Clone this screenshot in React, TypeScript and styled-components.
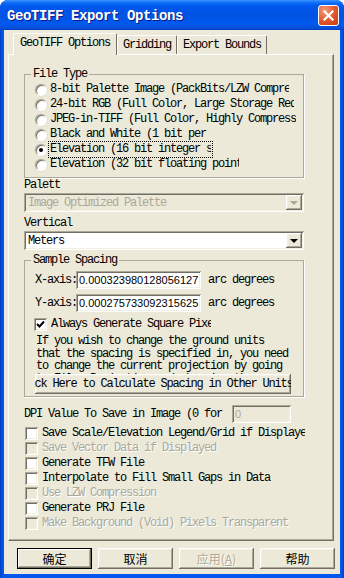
import React from 'react';
import styled, { createGlobalStyle, css } from 'styled-components';

const MONO = `"Liberation Mono", "Noto Sans CJK SC", monospace`;
const CJK = `"Noto Sans CJK SC", "Liberation Sans", sans-serif`;
const SANS = `"Liberation Sans", "Noto Sans CJK SC", sans-serif`;
const FACE = '#ECE9D8';
const DIS = '#ACA899';

const GlobalStyle = createGlobalStyle`
  *, *::before, *::after { box-sizing: border-box; }
  html, body { margin: 0; padding: 0; width: 344px; height: 578px; overflow: hidden; background: #fff; }
  #root { width: 344px; height: 578px; }
`;

const sunken = css`
  box-shadow: inset 1px 1px 0 #aca899, inset -1px -1px 0 #fff, inset 2px 2px 0 #716f64,
    inset -2px -2px 0 #f1efe2;
`;
const raised = css`
  box-shadow: inset -1px -1px 0 #716f64, inset 1px 1px 0 #fff, inset -2px -2px 0 #aca899,
    inset 2px 2px 0 #f1efe2;
`;

const Window = styled.div`
  width: 344px;
  height: 578px;
  display: flex;
  flex-direction: column;
  background: linear-gradient(to right, #0040c8 0, #0058ee 3px, #0058ee 341px, #0040c8 344px);
  border-radius: 8px 8px 0 0;
  overflow: hidden;
  font-family: ${MONO};
  font-size: 12px;
  letter-spacing: -1.2px;
  color: #000;
`;

const TitleBar = styled.div`
  height: 30px;
  flex: none;
  display: flex;
  align-items: center;
  justify-content: space-between;
  padding: 1px 5px 0 7px;
  background: linear-gradient(
    to bottom,
    #3d95ff 0px,
    #0a6af5 3px,
    #0058ee 6px,
    #0053e3 15px,
    #0058ee 24px,
    #0a4fd8 28px,
    #003fc4 30px
  );
`;

const TitleText = styled.span`
  color: #fff;
  font-weight: bold;
  font-size: 14px;
  letter-spacing: -0.4px;
  text-shadow: 1px 1px 0 #0a1e8a;
`;

const CloseButton = styled.div`
  width: 21px;
  height: 21px;
  border: 1px solid #fff;
  border-radius: 3px;
  background: radial-gradient(circle at 30% 25%, #f29a7c 0%, #e35a30 50%, #c43b12 100%);
  display: flex;
  align-items: center;
  justify-content: center;
`;

const Client = styled.div`
  flex: 1;
  margin: 0 4px 4px 4px;
  background: ${FACE};
  padding: 3px 0 0 4px;
  display: flex;
  flex-direction: column;
`;

const TabStrip = styled.div`
  display: flex;
  align-items: flex-end;
  height: 22px;
  margin: 0 0 -1px 5px;
  position: relative;
  z-index: 1;
`;

const Tab = styled.div<{ $active?: boolean }>`
  height: ${(p) => (p.$active ? 22 : 19)}px;
  margin-bottom: ${(p) => (p.$active ? 0 : 1)}px;
  padding: 0 ${(p) => (p.$active ? 6 : 5)}px ${(p) => (p.$active ? 3 : 0)}px;
  display: flex;
  align-items: center;
  white-space: nowrap;
  background: ${FACE};
  border-top: 1px solid #fff;
  border-left: 1px solid #fff;
  border-right: 1px solid #716f64;
  border-radius: 2px 2px 0 0;
`;

const Panel = styled.div`
  width: 326px;
  height: 487px;
  flex: none;
  background: ${FACE};
  border: 1px solid;
  border-color: #fff #716f64 #716f64 #fff;
  box-shadow: inset -1px -1px 0 #aca899;
  padding: 13px 0 0 15px;
  display: flex;
  flex-direction: column;
  align-items: flex-start;
`;

const Group = styled.fieldset<{ $pad: string; $mt?: number }>`
  margin: ${(p) => p.$mt ?? 0}px 0 0 0;
  width: 280px;
  min-width: 0;
  padding: ${(p) => p.$pad};
  border: 1px solid #aca899;
  box-shadow: 1px 1px 0 #fff;
  display: flex;
  flex-direction: column;
  align-items: flex-start;
`;

const Legend = styled.legend`
  padding: 0 2px;
  margin-left: -4px;
  height: 12px;
  line-height: 12px;
`;

const OptionRow = styled.div`
  display: flex;
  align-items: center;
  height: 15px;
  gap: 3px;
`;

const RadioDot = styled.span<{ $on?: boolean }>`
  width: 12px;
  height: 12px;
  flex: none;
  border-radius: 50%;
  background: #fff;
  border: 1px solid;
  border-color: #aca899 #fff #fff #aca899;
  box-shadow: inset 1px 1px 0 #716f64, 0 0 0 0.5px #d8d4c4;
  display: flex;
  align-items: center;
  justify-content: center;
  &::after {
    content: '';
    width: 4px;
    height: 4px;
    border-radius: 50%;
    background: #000;
    display: ${(p) => (p.$on ? 'block' : 'none')};
  }
`;

const ClipText = styled.span<{ $w?: number; $focus?: boolean; $disabled?: boolean }>`
  ${(p) => (p.$w ? `width: ${p.$w}px; overflow: hidden;` : '')}
  white-space: nowrap;
  line-height: 13px;
  height: 13px;
  color: ${(p) => (p.$disabled ? DIS : '#000')};
  ${(p) => (p.$disabled ? 'text-shadow: 1px 1px 0 #fff;' : '')}
  outline: ${(p) => (p.$focus ? '1px dotted #000' : 'none')};
  outline-offset: 1px;
`;

const FieldLabel = styled.div<{ $mt: number }>`
  margin-top: ${(p) => p.$mt}px;
  height: 12px;
  line-height: 12px;
`;

const Select = styled.div<{ $disabled?: boolean; $mt: number }>`
  margin-top: ${(p) => p.$mt}px;
  width: 280px;
  height: 19px;
  display: flex;
  align-items: center;
  padding: 2px 2px 2px 4px;
  background: ${(p) => (p.$disabled ? FACE : '#fff')};
  color: ${(p) => (p.$disabled ? DIS : '#000')};
  ${sunken}
`;

const SelectText = styled.span`
  flex: 1;
  white-space: nowrap;
  overflow: hidden;
`;

const DropButton = styled.span<{ $disabled?: boolean }>`
  width: 16px;
  height: 15px;
  flex: none;
  background: ${FACE};
  ${raised}
  display: flex;
  align-items: center;
  justify-content: center;
  &::after {
    content: '';
    border-left: 4px solid transparent;
    border-right: 4px solid transparent;
    border-top: 4px solid ${(p) => (p.$disabled ? DIS : '#000')};
    margin-top: 1px;
  }
`;

const AxisRow = styled.div<{ $mt?: number }>`
  margin-top: ${(p) => p.$mt ?? 0}px;
  display: flex;
  align-items: center;
  height: 18px;
`;

const AxisLabel = styled.span`
  width: 41px;
  white-space: nowrap;
  overflow: hidden;
`;

const TextInput = styled.div<{ $w: number; $disabled?: boolean }>`
  width: ${(p) => p.$w}px;
  flex: none;
  height: 18px;
  padding: 0 2px 0 3px;
  display: flex;
  align-items: center;
  font-family: ${SANS};
  font-size: 11px;
  letter-spacing: 0;
  white-space: nowrap;
  overflow: hidden;
  background: ${(p) => (p.$disabled ? FACE : '#fff')};
  color: ${(p) => (p.$disabled ? DIS : '#000')};
  ${sunken}
`;

const Unit = styled.span`
  margin-left: 7px;
  white-space: nowrap;
`;

const CheckRow = styled.div<{ $mt?: number; $ml?: number; $h?: number }>`
  margin-top: ${(p) => p.$mt ?? 0}px;
  margin-left: ${(p) => p.$ml ?? 0}px;
  height: ${(p) => p.$h ?? 15}px;
  display: flex;
  align-items: center;
  gap: 4px;
`;

const CheckBox = styled.span<{ $disabled?: boolean }>`
  width: 13px;
  height: 13px;
  flex: none;
  display: flex;
  align-items: center;
  justify-content: center;
  background: ${(p) => (p.$disabled ? FACE : '#fff')};
  ${sunken}
`;

const HelpText = styled.div`
  margin: 4px 0 0 1px;
  width: 257px;
  height: 39px;
  overflow: hidden;
  line-height: 12.5px;
`;

const CalcButton = styled.div`
  width: 256px;
  height: 20px;
  flex: none;
  display: flex;
  align-items: center;
  justify-content: center;
  padding-right: 17px;
  overflow: hidden;
  white-space: nowrap;
  background: ${FACE};
  ${raised}
`;

const DpiRow = styled.div`
  margin-top: 7px;
  height: 19px;
  display: flex;
  align-items: center;
  gap: 4px;
`;

const DpiLabel = styled.span`
  width: 204px;
  flex: none;
  white-space: nowrap;
  overflow: hidden;
`;

const CheckList = styled.div`
  margin: 3px 0 0 1px;
  display: flex;
  flex-direction: column;
`;

const ButtonRow = styled.div`
  display: flex;
  gap: 6px;
  margin: 7px 0 0 9px;
`;

const DialogButton = styled.div<{ $default?: boolean; $disabled?: boolean }>`
  width: 75px;
  height: 21px;
  display: flex;
  align-items: center;
  justify-content: center;
  font-family: ${CJK};
  font-size: 12px;
  letter-spacing: 0;
  color: ${(p) => (p.$disabled ? DIS : '#000')};
  background: ${FACE};
  ${raised}
  ${(p) =>
    p.$default &&
    css`
      border: 1px solid #000;
      box-shadow: inset -1px -1px 0 #716f64, inset 1px 1px 0 #fff, inset -2px -2px 0 #aca899;
    `}
  ${(p) => (p.$disabled ? 'text-shadow: 1px 1px 0 #fff;' : '')}
`;

const Check = () => (
  <svg width="9" height="9" viewBox="0 0 9 9">
    <path d="M1 4 L3.5 6.5 L8 1.5" fill="none" stroke="#000" strokeWidth="2" />
  </svg>
);

const CloseX = () => (
  <svg width="11" height="11" viewBox="0 0 11 11">
    <path d="M1.5 1.5 L9.5 9.5 M9.5 1.5 L1.5 9.5" stroke="#fff" strokeWidth="2.2" strokeLinecap="square" />
  </svg>
);

const fileTypes: { label: string; w: number; on?: boolean }[] = [
  { label: '8-bit Palette Image (PackBits/LZW Compression)', w: 239 },
  { label: '24-bit RGB (Full Color, Large Storage Requirements)', w: 244 },
  { label: 'JPEG-in-TIFF (Full Color, Highly Compressed)', w: 246 },
  { label: 'Black and White (1 bit per pixel)', w: 158 },
  { label: 'Elevation (16 bit integer samples)', w: 161, on: true },
  { label: 'Elevation (32 bit floating point samples)', w: 189 },
];

const options: { label: string; w?: number; disabled?: boolean }[] = [
  { label: 'Save Scale/Elevation Legend/Grid if Displayed', w: 263 },
  { label: 'Save Vector Data if Displayed', disabled: true },
  { label: 'Generate TFW File' },
  { label: 'Interpolate to Fill Small Gaps in Data' },
  { label: 'Use LZW Compression', disabled: true },
  { label: 'Generate PRJ File' },
  { label: 'Make Background (Void) Pixels Transparent', disabled: true },
];

export default function App() {
  return (
    <>
      <GlobalStyle />
      <Window>
        <TitleBar>
          <TitleText>GeoTIFF Export Options</TitleText>
          <CloseButton>
            <CloseX />
          </CloseButton>
        </TitleBar>
        <Client>
          <TabStrip>
            <Tab $active>GeoTIFF Options</Tab>
            <Tab>Gridding</Tab>
            <Tab>Export Bounds</Tab>
          </TabStrip>
          <Panel>
            <Group $pad="2px 10px 5px 10px">
              <Legend>File Type</Legend>
              {fileTypes.map((f) => (
                <OptionRow key={f.label}>
                  <RadioDot $on={f.on} />
                  <ClipText $w={f.w} $focus={f.on}>
                    {f.label}
                  </ClipText>
                </OptionRow>
              ))}
            </Group>
            <FieldLabel $mt={1}>Palett</FieldLabel>
            <Select $mt={2} $disabled>
              <SelectText>Image Optimized Palette</SelectText>
              <DropButton $disabled />
            </Select>
            <FieldLabel $mt={5}>Vertical</FieldLabel>
            <Select $mt={2}>
              <SelectText>Meters</SelectText>
              <DropButton />
            </Select>
            <Group $pad="5px 10px 2px 10px" $mt={4}>
              <Legend>Sample Spacing</Legend>
              <AxisRow>
                <AxisLabel>X-axis:</AxisLabel>
                <TextInput $w={125}>0.000323980128056127</TextInput>
                <Unit>arc degrees</Unit>
              </AxisRow>
              <AxisRow $mt={5}>
                <AxisLabel>Y-axis:</AxisLabel>
                <TextInput $w={125}>0.000275733092315625</TextInput>
                <Unit>arc degrees</Unit>
              </AxisRow>
              <CheckRow $mt={5} $ml={-1} $h={14}>
                <CheckBox>
                  <Check />
                </CheckBox>
                <ClipText $w={160}>Always Generate Square Pixels</ClipText>
              </CheckRow>
              <HelpText>
                If you wish to change the ground units that the spacing is specified in, you need to
                change the current projection by going to File-&gt;Projection and changing the
                projection units there.
              </HelpText>
              <CalcButton>Click Here to Calculate Spacing in Other Units</CalcButton>
            </Group>
            <DpiRow>
              <DpiLabel>DPI Value To Save in Image (0 for Default)</DpiLabel>
              <TextInput $w={59} $disabled>
                0
              </TextInput>
            </DpiRow>
            <CheckList>
              {options.map((o) => (
                <CheckRow key={o.label}>
                  <CheckBox $disabled={o.disabled} />
                  <ClipText $w={o.w} $disabled={o.disabled}>
                    {o.label}
                  </ClipText>
                </CheckRow>
              ))}
            </CheckList>
          </Panel>
          <ButtonRow>
            <DialogButton $default>确定</DialogButton>
            <DialogButton>取消</DialogButton>
            <DialogButton $disabled>
              应用(<u>A</u>)
            </DialogButton>
            <DialogButton>帮助</DialogButton>
          </ButtonRow>
        </Client>
      </Window>
    </>
  );
}
